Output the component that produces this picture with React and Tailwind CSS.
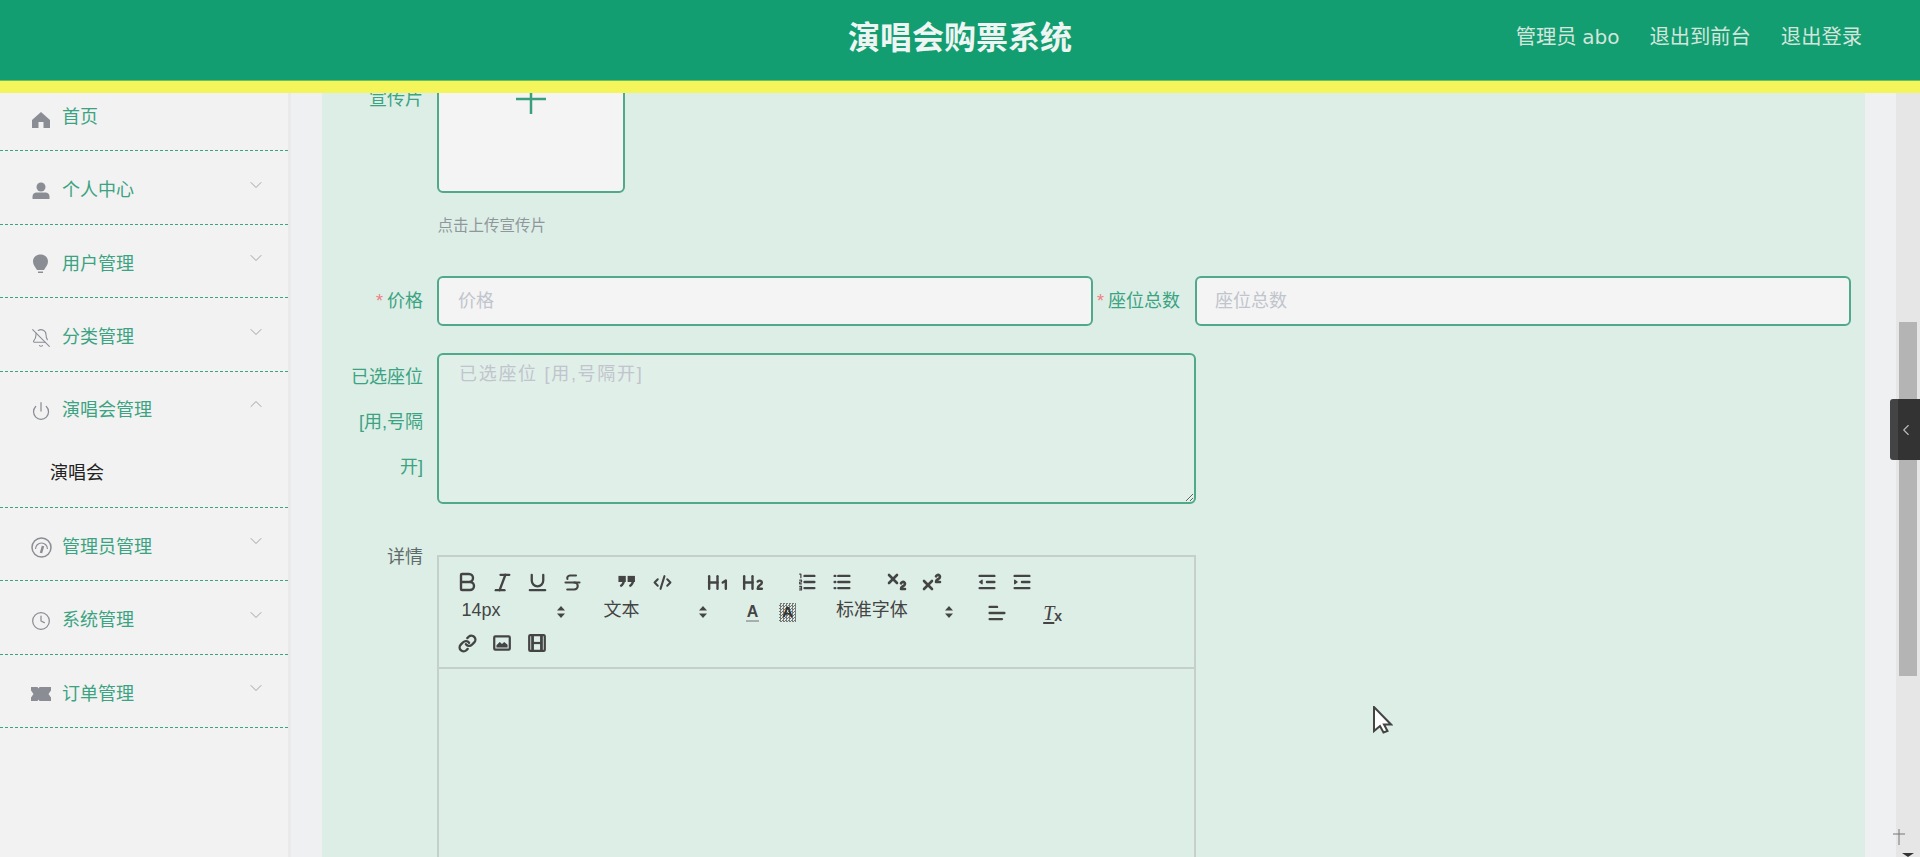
import {
  Bold, ChevronDown, ChevronLeft, ChevronUp, Clock, CodeXml, Heading1, Heading2, Italic,
  Link, Power, BellOff, Strikethrough, Subscript, Superscript, Underline,
} from "lucide-react";

const HomeIcon = () => (
  <svg width="20" height="20" viewBox="0 0 20 20" className="text-[#8a8d94]">
    <path fill="currentColor" d="M10 2 1 10v8h6.500v-6h5v6H19v-8z" />
  </svg>
);
const UserIcon = () => (
  <svg width="20" height="20" viewBox="0 0 20 20" className="text-[#8a8d94]">
    <circle cx="10" cy="6" r="4.500" fill="currentColor" />
    <path fill="currentColor" d="M1.500 18v-2.500c0-2.500 2-4 4-4h9c2 0 4 1.500 4 4V18z" />
  </svg>
);
const BulbIcon = () => (
  <svg width="20" height="20" viewBox="0 0 20 20" className="text-[#8a8d94]">
    <path fill="currentColor" d="M9.500 0.500C5 .5 2 3.500 2 7.500c0 3.500 2.500 5.500 4 8.500h7c1.500-3 4-5 4-8.500 0-4-3-7-7.500-7z" />
    <rect x="7" y="17.500" width="5" height="1.500" fill="currentColor" />
  </svg>
);
const GaugeIcon = () => (
  <svg width="21" height="21" viewBox="0 0 21 21" fill="none" stroke="#8a8d94" className="shrink-0">
    <circle cx="10.500" cy="10.500" r="9.500" strokeWidth="1.500" />
    <path d="M4.500 12a6 6 0 1 1 12 0" strokeWidth="1.200" />
    <path d="M10 16l2-7" strokeWidth="2.500" />
  </svg>
);
const TicketIcon = () => (
  <svg width="20" height="20" viewBox="0 0 20 20" className="text-[#8a8d94]">
    <path fill="currentColor" d="M0 3h6.500l1 1.500 1-1.500H20v3.500L17.500 10l2.500 3.500V17H8.500l-1-1.500-1 1.500H0v-3.500L2.500 10 0 6.500z" />
  </svg>
);

const menu = [
  { name: "个人中心", icon: <UserIcon /> },
  { name: "用户管理", icon: <BulbIcon /> },
  { name: "分类管理", icon: <BellOff size={20} strokeWidth={1.3} className="text-[#8a8d94]" /> },
];
const menu2 = [
  { name: "管理员管理", icon: <GaugeIcon /> },
  { name: "系统管理", icon: <Clock size={20} strokeWidth={1.5} className="text-[#8a8d94]" /> },
  { name: "订单管理", icon: <TicketIcon /> },
];

function MenuRow({ name, icon }) {
  return (
    <div className="flex items-center h-[73.500px] pt-[7px] pl-[31px] border-b border-dashed border-[#3aa582]">
      <span className="w-[20px] h-[20px] mr-[11px] flex items-center justify-center">{icon}</span>
      <span className="text-[#3ba381] text-[18px]">{name}</span>
      <ChevronDown size={20} strokeWidth={1} className="ml-auto mr-[22px] mb-[12px] text-[#909399]" />
    </div>
  );
}

function Sidebar() {
  return (
    <aside className="w-[291px] shrink-0 bg-[#f2f2f2] border-r-[3px] border-[#eaeaea]">
      <div className="flex items-center h-[58px] pb-[9px] pl-[31px] border-b border-dashed border-[#3aa582]">
        <span className="w-[20px] h-[20px] mr-[11px] mt-[5px]"><HomeIcon /></span>
        <span className="text-[#3ba381] text-[18px]">首页</span>
      </div>
      {menu.map((m) => <MenuRow key={m.name} {...m} />)}
      <div className="border-b border-dashed border-[#3aa582]">
        <div className="flex items-center h-[73.500px] pt-[5px] pl-[31px]">
          <span className="w-[20px] h-[20px] mr-[11px]">
            <Power size={20} strokeWidth={1.5} className="text-[#8a8d94]" />
          </span>
          <span className="text-[#3ba381] text-[18px]">演唱会管理</span>
          <ChevronUp size={20} strokeWidth={1} className="ml-auto mr-[22px] mb-[14px] text-[#909399]" />
        </div>
        <div className="h-[61.500px] pb-[5px] pl-[50px] flex items-center text-[18px] text-[#222]">演唱会</div>
      </div>
      {menu2.map((m) => <MenuRow key={m.name} {...m} />)}
    </aside>
  );
}

const Btn = ({ children, className = "" }) => (
  <span className={"w-[35.200px] h-[30px] flex items-center justify-center text-[#444] " + className}>{children}</span>
);
const Ql = ({ children }) => (
  <svg width="22" height="22" viewBox="0 0 18 18" fill="none" stroke="#444" strokeWidth="2" strokeLinecap="round" strokeLinejoin="round">
    {children}
  </svg>
);
const Arrows = () => (
  <svg width="18" height="18" viewBox="0 0 18 18" className="absolute right-0 top-[7px]">
    <polygon fill="#444" points="5 7.500 9 3 13 7.500" />
    <polygon fill="#444" points="5 10.500 9 15 13 10.500" />
  </svg>
);
const Picker = ({ children, className }) => (
  <span className={"relative h-[30px] flex items-center text-[#444] text-[18px] -mt-[2px] " + className}>
    {children}
    <Arrows />
  </span>
);

function Toolbar() {
  return (
    <div className="h-[112px] pt-[10px] pl-[10.500px] border-b-2 border-[#c6d0cb]">
      <div className="flex h-[30.500px]">
        <Btn><Bold size={24} strokeWidth={2.4} /></Btn>
        <Btn><Italic size={23} strokeWidth={2.5} /></Btn>
        <Btn><Underline size={23} strokeWidth={2.4} /></Btn>
        <Btn className="mr-[19.500px]"><Strikethrough size={21} strokeWidth={2.4} /></Btn>
        <Btn>
          <svg width="22" height="22" viewBox="0 0 18 18" fill="none" stroke="#444" strokeWidth="2">
            <rect x="3" y="5" width="4" height="3" fill="#444" />
            <rect x="10.500" y="5" width="4" height="3" fill="#444" />
            <path d="M6.500 7c0 4-3 5.500-3 5.500M14 7c0 4-3 5.500-3 5.500" />
          </svg>
        </Btn>
        <Btn className="mr-[19.500px]"><CodeXml size={19} strokeWidth={2.6} /></Btn>
        <Btn><Heading1 size={25} strokeWidth={2.3} /></Btn>
        <Btn className="mr-[19.500px]"><Heading2 size={25} strokeWidth={2.3} /></Btn>
        <Btn>
          <Ql>
            <path d="M7 4h8M7 9h8M7 14h8" />
            <path strokeWidth="1" d="M3 2.500h1v3M3 7.500h1.500v1.500H3v1.500h1.500M3 12.500h1.500v3H3M3 14h1.500" />
          </Ql>
        </Btn>
        <Btn className="mr-[19.500px]">
          <Ql>
            <path d="M6 4h9M6 9h9M6 14h9M3 4h.5M3 9h.5M3 14h.5" />
          </Ql>
        </Btn>
        <Btn><Subscript size={24} strokeWidth={2.6} /></Btn>
        <Btn className="mr-[19.500px]"><Superscript size={24} strokeWidth={2.6} /></Btn>
        <Btn>
          <Ql>
            <path d="M3 4h12M3 14h12M9 9h6" />
            <polygon points="5 7.500 5 10.500 3 9" fill="#444" strokeWidth="1" />
          </Ql>
        </Btn>
        <Btn>
          <Ql>
            <path d="M3 4h12M3 14h12M9 9h6" />
            <polygon points="3 7.500 3 10.500 5 9" fill="#444" strokeWidth="1" />
          </Ql>
        </Btn>
      </div>
      <div className="flex h-[30.500px]">
        <Picker className="w-[120px] pl-[12px] text-[17px]">14px</Picker>
        <Picker className="w-[124px] pl-[16px] ml-[18px]">文本</Picker>
        <Btn className="ml-[23.500px]">
          <span className="font-bold text-[16px] leading-[17px] border-b-2 border-[#a8aeab] px-[1px]">A</span>
        </Btn>
        <Btn>
          <span className="w-[17px] h-[19px] flex items-center justify-center font-bold text-[15px] text-[#333] bg-[repeating-conic-gradient(#777_0_25%,transparent_0_50%)] bg-[length:3px_3px]">A</span>
        </Btn>
        <Picker className="w-[134px] pl-[12px] ml-[18.500px]">标准字体</Picker>
        <Btn className="ml-[22px]">
          <Ql>
            <path d="M3 9h12M3 14h10M3 4h6" />
          </Ql>
        </Btn>
        <Btn className="ml-[20px]">
          <span className="italic text-[20px] font-['Liberation_Serif',serif] underline underline-offset-2">T</span>
          <span className="font-bold text-[14px] mt-[7px]">x</span>
        </Btn>
      </div>
      <div className="flex h-[30px]">
        <Btn><Link size={19} strokeWidth={3} /></Btn>
        <Btn>
          <svg width="20" height="20" viewBox="0 0 18 18" fill="none" stroke="#444" strokeWidth="2">
            <rect x="2" y="3" width="14" height="12" rx="1" />
            <path fill="#444" stroke="none" d="M4 13V11l3-3 2 2 2-2 3 2.500V13z" />
          </svg>
        </Btn>
        <Btn>
          <svg width="20" height="20" viewBox="0 0 18 18" fill="none" stroke="#444" strokeWidth="2">
            <rect x="2" y="2" width="14" height="14" rx="1" />
            <path strokeWidth="2.500" d="M5 2v14M13 2v14" />
            <path d="M5 9h8" />
          </svg>
        </Btn>
      </div>
    </div>
  );
}

export default function App() {
  return (
    <div className="h-screen w-full overflow-hidden flex flex-col bg-[#eff0f2] font-['Liberation_Sans','Noto_Sans_CJK_SC',sans-serif]">
      <header className="h-[81px] shrink-0 bg-[#129e71] border-b border-[#6cc15b] grid grid-cols-[1fr_auto_1fr] items-center">
        <div />
        <h1 className="text-[32px] font-bold text-[#eff5f2] -mt-[4px]">演唱会购票系统</h1>
        <nav className="flex justify-end gap-[30px] pr-[58px] text-[20.300px] text-[#d5e5dd] -mt-[5px]">
          <span>管理员 <span className="font-['DejaVu_Sans',sans-serif] text-[20px]">abo</span></span>
          <span>退出到前台</span>
          <span>退出登录</span>
        </nav>
      </header>
      <div className="h-[12px] shrink-0 bg-[#f4f55b]" />

      <div className="relative flex-1 flex min-h-0 overflow-hidden">
        <Sidebar />
        <main className="flex-1 px-[31px] min-w-0 overflow-hidden">
          <div className="bg-[#ddeee7] h-full overflow-hidden text-[18px] text-[#3ba381]">
            <div className="-mt-[88px]">
              <div className="flex items-center">
                <label className="w-[101px] mr-[14px] text-right">宣传片</label>
                <div className="w-[188px] h-[188px] bg-[#f4f4f4] border-2 border-[#4fa98a] rounded-[6px] flex items-center justify-center">
                  <svg width="30" height="30" viewBox="0 0 30 30">
                    <path d="M0 15H30M15 0V30" stroke="#3b9f7f" strokeWidth="2.500" fill="none" />
                  </svg>
                </div>
              </div>
              <p className="ml-[115.500px] mt-[22px] h-[21px] leading-[22px] text-[15.500px] text-[#8f979b]">点击上传宣传片</p>
              <div className="flex items-center mt-[40px]">
                <label className="w-[101px] mr-[14px] text-right"><span className="text-[#f08080] mr-[4px]">*</span>价格</label>
                <input placeholder="价格" className="w-[656px] h-[50px] px-[19px] bg-[#f4f4f4] border-2 border-[#4fa98a] rounded-[6px] placeholder:text-[#c0c4cc]" />
                <label className="w-[102px] pr-[15px] text-right"><span className="text-[#f08080] mr-[4px]">*</span>座位总数</label>
                <input placeholder="座位总数" className="w-[656px] h-[50px] px-[18px] bg-[#f4f4f4] border-2 border-[#4fa98a] rounded-[6px] placeholder:text-[#c0c4cc]" />
              </div>
              <div className="flex items-start mt-[27px]">
                <label className="w-[101px] mr-[14px] pt-[2px] text-right leading-[45px]">
                  已选座位<br />[用,号隔<br />开]
                </label>
                <textarea placeholder="已选座位 [用,号隔开]" className="w-[759px] h-[151px] px-[20px] py-[6px] bg-[#e1efe9] border-2 border-[#4fa98a] rounded-[6px] tracking-[1.700px] placeholder:text-[#c0c4cc]" />
              </div>
              <div className="flex items-start mt-[29px]">
                <label className="w-[101px] mr-[14px] pt-[2px] text-right leading-[45px] text-[#5f6b68]">详情</label>
                <div className="w-[759px] h-[500px] mt-[22px] border-2 border-[#c6d0cb]">
                  <Toolbar />
                </div>
              </div>
            </div>
          </div>
        </main>
        <div className="w-[24px] shrink-0 bg-[#e6e6e6] px-[3px] pt-[229px]">
          <div className="h-[354px] bg-[#b4b4b4]" />
        </div>

        {/* Overlays: drawer handle, mouse pointer, cursor marks */}
        <div className="absolute right-0 top-[306px] w-[30px] h-[61px] bg-[#333] border-l-[8px] border-[#444] rounded-l-[3px] flex items-center justify-center">
          <ChevronLeft size={18} strokeWidth={1.5} className="text-[#bbb] -ml-[6px]" />
        </div>
        <svg width="20" height="28" viewBox="0 0 20 28" className="absolute left-[1373px] top-[613px]">
          <path d="M1 1v24l6-5 3.500 6.500 4-1.500-3.500-6.500H18z" fill="#fff" stroke="#444" strokeWidth="2" />
        </svg>
        <svg width="14" height="18" viewBox="0 0 14 18" className="absolute left-[1892px] top-[735px]">
          <path d="M7 1v16M1 6h12" stroke="#777" strokeWidth="1" fill="none" />
        </svg>
        <svg width="12" height="4" viewBox="0 0 12 4" className="absolute left-[1902px] top-[760px]">
          <path d="M0 0h12L6 4z" fill="#333" />
        </svg>
      </div>
    </div>
  );
}
